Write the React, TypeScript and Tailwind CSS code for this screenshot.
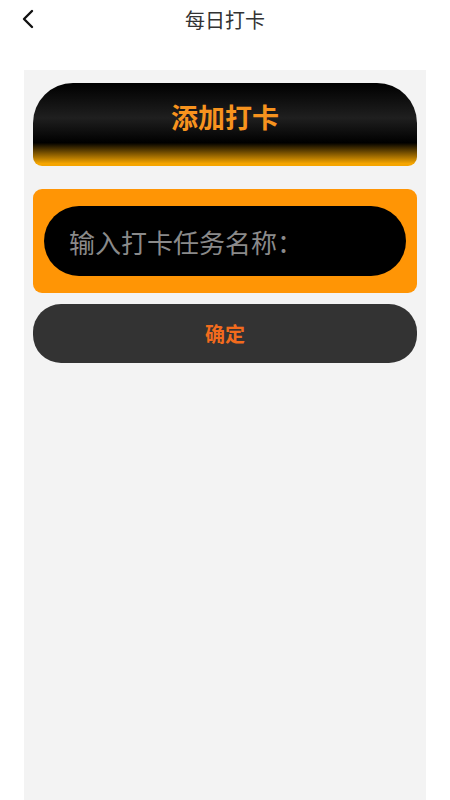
import React from 'react';

const font = { fontFamily: '"Noto Sans CJK SC", "Noto Sans", sans-serif' };

const BackIcon = () => (
  <svg width="14" height="20" viewBox="0 0 14 20" fill="none">
    <path d="M11 2 L3 10 L11 18" stroke="#111" strokeWidth="2.4" strokeLinecap="round" strokeLinejoin="round" />
  </svg>
);

export default function App() {
  return (
    <div className="w-[450px] h-[800px] bg-white flex flex-col overflow-hidden" style={font}>
      {/* top bar */}
      <div className="relative h-[40px] flex items-center justify-center shrink-0">
        <button className="absolute left-[21px] top-[9px]">
          <BackIcon />
        </button>
        <span className="text-[20px] text-[#333] leading-none">每日打卡</span>
      </div>

      <div className="h-[30px] shrink-0" />

      {/* panel */}
      <div className="mx-[24px] flex-1 bg-[#f3f3f3] px-[9px] pt-[13px] flex flex-col">
        <div className="h-[83px] rounded-t-[40px] rounded-b-[9px] bg-[linear-gradient(to_bottom,#000_0%,#1f1f1f_42%,#000_72%,#f5a500_97%)] flex items-start justify-center pt-[15px]">
          <span className="text-[27px] font-bold text-[#f7931e] leading-[38px]">添加打卡</span>
        </div>

        <div className="mt-[23px] h-[104px] rounded-[9px] bg-[#ff9505] px-[11px] flex items-center">
          <div className="w-full h-[70px] rounded-full bg-black flex items-center pl-[25px]">
            <span className="text-[26px] text-[#8a8a8a]">输入打卡任务名称：</span>
          </div>
        </div>

        <button className="mt-[11px] h-[59px] rounded-[28px] bg-[#333333] flex items-center justify-center">
          <span className="text-[20px] font-bold text-[#f26b1d]">确定</span>
        </button>
      </div>
    </div>
  );
}
